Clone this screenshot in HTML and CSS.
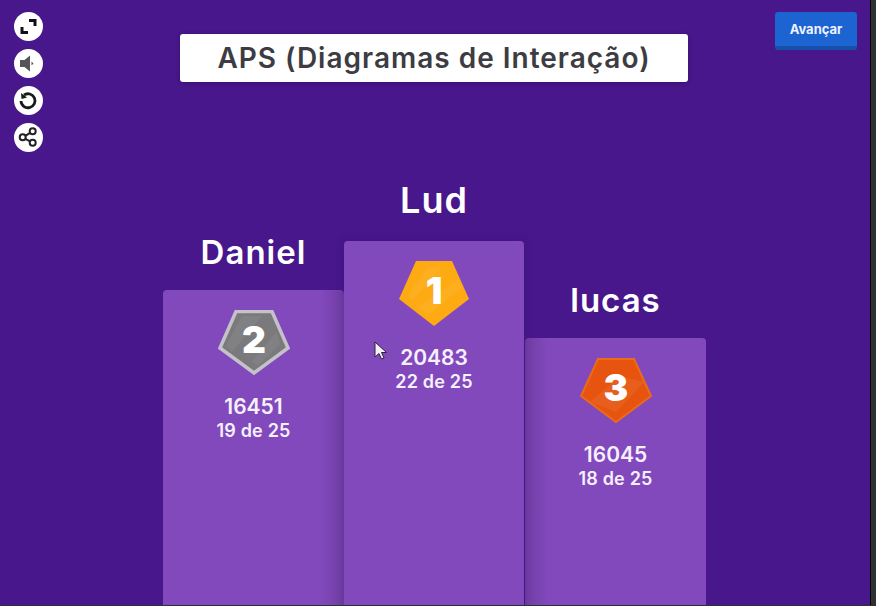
FILE: index.html
```html
<!DOCTYPE html>
<html lang="en">
<head>
    <meta charset="UTF-8">
    <meta name="viewport" content="width=device-width, initial-scale=1.0">
    <title>APS (Diagramas de Interação)</title>
    <link rel="stylesheet" href="styles.css">
</head>
<body>

    <div class="stage">
        <div class="top-bar">
            <div class="tools">
                <span class="tool">
                    <svg viewBox="0 0 29 29"><path d="M15 8.500h6v5.500M14 20.500h-6v-5.500" class="icon-thick"/></svg>
                </span>
                <span class="tool">
                    <svg viewBox="0 0 29 29"><path d="M6 11h4.500l5.500-4.500v16l-5.500-4.500h-4.500z" class="icon-fill"/><path d="M17.500 12.500l2 2-2 2z" class="icon-fill"/></svg>
                </span>
                <span class="tool">
                    <svg viewBox="0 0 29 29"><path d="M10 9a7 7 0 1 1-3 6" class="icon-line"/><path d="M7 7l.5 6 5.500-1.500z" class="icon-solid"/></svg>
                </span>
                <span class="tool">
                    <svg viewBox="0 0 29 29"><circle cx="8.700" cy="14.300" r="3" class="icon-thin"/><circle cx="18.700" cy="8.300" r="3" class="icon-thin"/><circle cx="18.700" cy="19.700" r="3" class="icon-thin"/><path d="M11.300 12.800l4.800-3M11.300 15.800l4.800 2.600" class="icon-thin"/></svg>
                </span>
            </div>
            <h1 class="title">APS (Diagramas de Interação)</h1>
            <button class="next-btn">Avançar</button>
        </div>

        <div class="podium">
            <div class="place place-second">
                <div class="name">Daniel</div>
                <div class="bar">
                    <svg class="medal" viewBox="0 0 72 65">
                        <polygon points="18,1.500 54,1.500 70,38 36,63 2,38" class="medal-silver"/>
                        <path d="M8 36L24 6h20L14 42zM34 52l24-30 4 12-22 22z" class="medal-shine"/>
                        <text x="36" y="43" class="medal-num">2</text>
                    </svg>
                    <div class="score">16451</div>
                    <div class="hits">19 de 25</div>
                </div>
            </div>
            <div class="place place-first">
                <div class="name">Lud</div>
                <div class="bar">
                    <svg class="medal" viewBox="0 0 72 65">
                        <polygon points="18,0 54,0 71,38 36,65 1,38" class="medal-gold"/>
                        <path d="M20 46L60 18l4 8-34 28zM10 34L30 6h14L14 40z" class="medal-shine"/>
                        <text x="36" y="43" class="medal-num">1</text>
                    </svg>
                    <div class="score">20483</div>
                    <div class="hits">22 de 25</div>
                </div>
                <svg class="cursor" viewBox="0 0 14 20">
                    <path d="M1 1v15l4-3.500 2.500 5.500 2.500-1-2.500-5.500h5z"/>
                </svg>
            </div>
            <div class="place place-third">
                <div class="name">lucas</div>
                <div class="bar">
                    <svg class="medal" viewBox="0 0 72 65">
                        <polygon points="18,1 54,1 71,38 36,64 1,38" class="medal-bronze"/>
                        <path d="M10 44L40 18l24 6-28 30z" class="medal-shine"/>
                        <text x="36" y="43" class="medal-num">3</text>
                    </svg>
                    <div class="score">16045</div>
                    <div class="hits">18 de 25</div>
                </div>
            </div>
        </div>
    </div>

</body>
</html>
```

FILE: styles.css
```css
/* Quiz results screen */
* {
    box-sizing: border-box;
}
html, body {
    height: 100%;
}
body {
    margin: 0;
    font-family: Inter, "Open Sans", sans-serif;
    background-color: #2e3133;
    overflow: hidden;
}
.stage {
    width: 871px;
    height: 605px;
    display: flex;
    flex-direction: column;
    justify-content: space-between;
    background-color: #47178b;
    border-right: 1px solid #000;
    overflow: hidden;
}

/* top row */
.top-bar {
    display: grid;
    grid-template-columns: 180px 508px 1fr;
    align-items: start;
}
.tools {
    display: flex;
    flex-direction: column;
    align-items: flex-start;
    gap: 8px;
    padding: 12px 0 0 14px;
}
.tool {
    width: 29px;
    height: 29px;
    border-radius: 50%;
    background-color: #fff;
}
.tool svg {
    display: block;
    width: 29px;
    height: 29px;
}
.icon-thick {
    fill: none;
    stroke: #111;
    stroke-width: 3;
}
.icon-fill {
    fill: #555;
}
.icon-line {
    fill: none;
    stroke: #1a1a1a;
    stroke-width: 2.8;
}
.icon-solid {
    fill: #1a1a1a;
}
.icon-thin {
    fill: none;
    stroke: #222;
    stroke-width: 2;
}
.title {
    margin: 34px 0 0;
    height: 48px;
    line-height: 48px;
    text-align: center;
    font-size: 28px;
    font-weight: 600;
    letter-spacing: 1px;
    color: #3d3c42;
    background-color: #fff;
    border-radius: 3px;
    box-shadow: 0 1px 4px rgba(0, 0, 0, 0.25);
}
.next-btn {
    justify-self: end;
    width: 82px;
    height: 38px;
    margin: 12px 13px 0 0;
    padding: 0;
    font-family: inherit;
    font-size: 13px;
    font-weight: 700;
    color: #eef3ff;
    background-color: #1b64d2;
    border: none;
    border-bottom: 4px solid #1650a8;
    border-radius: 3px;
}

/* podium */
.podium {
    display: flex;
    align-items: flex-end;
    padding-left: 163px;
}
.place {
    position: relative;
    width: 181px;
    text-align: center;
    color: #f6f0fc;
}
.place-first {
    width: 180px;
    z-index: 1;
    margin-right: 1px;
}
.name {
    height: 61px;
    font-size: 33px;
    line-height: 46px;
    font-weight: 600;
    letter-spacing: 1px;
    color: #fff;
}
.place-first .name {
    font-size: 36px;
    line-height: 36px;
    height: 59px;
}
.bar {
    padding-top: 20px;
    background-color: #8249bd;
    border-radius: 4px 4px 0 0;
}
.place-first .bar {
    height: 364px;
    box-shadow: 0 0 10px rgba(40, 10, 80, 0.2);
}
.place-second .bar {
    height: 315px;
    background-image: linear-gradient(to left, #6f3da3, #8249bd 24px);
}
.place-third .bar {
    height: 267px;
    background-image: linear-gradient(to right, #6f3da3, #8249bd 24px);
}
.medal {
    display: block;
    width: 72px;
    height: 65px;
    margin: 0 auto 19px;
}
.medal-gold {
    fill: #fdaa13;
}
.medal-silver {
    fill: #7a797c;
    stroke: #c4c2c8;
    stroke-width: 3.500;
}
.medal-bronze {
    fill: #e6540f;
    stroke: #ec6a18;
    stroke-width: 2;
}
.medal-shine {
    fill: #fff;
    opacity: 0.06;
}
.medal-num {
    font-family: Inter, sans-serif;
    font-size: 37px;
    font-weight: 900;
    fill: #fff;
    text-anchor: middle;
}
.score {
    font-size: 21px;
    line-height: 26px;
    font-weight: 600;
}
.hits {
    font-size: 18px;
    line-height: 22px;
    font-weight: 600;
    letter-spacing: 0.2px;
}
.cursor {
    position: absolute;
    left: 30px;
    top: 159px;
    width: 14px;
    height: 20px;
}
.cursor path {
    fill: #f4f2f8;
    stroke: #2a2340;
    stroke-width: 1;
}
```
